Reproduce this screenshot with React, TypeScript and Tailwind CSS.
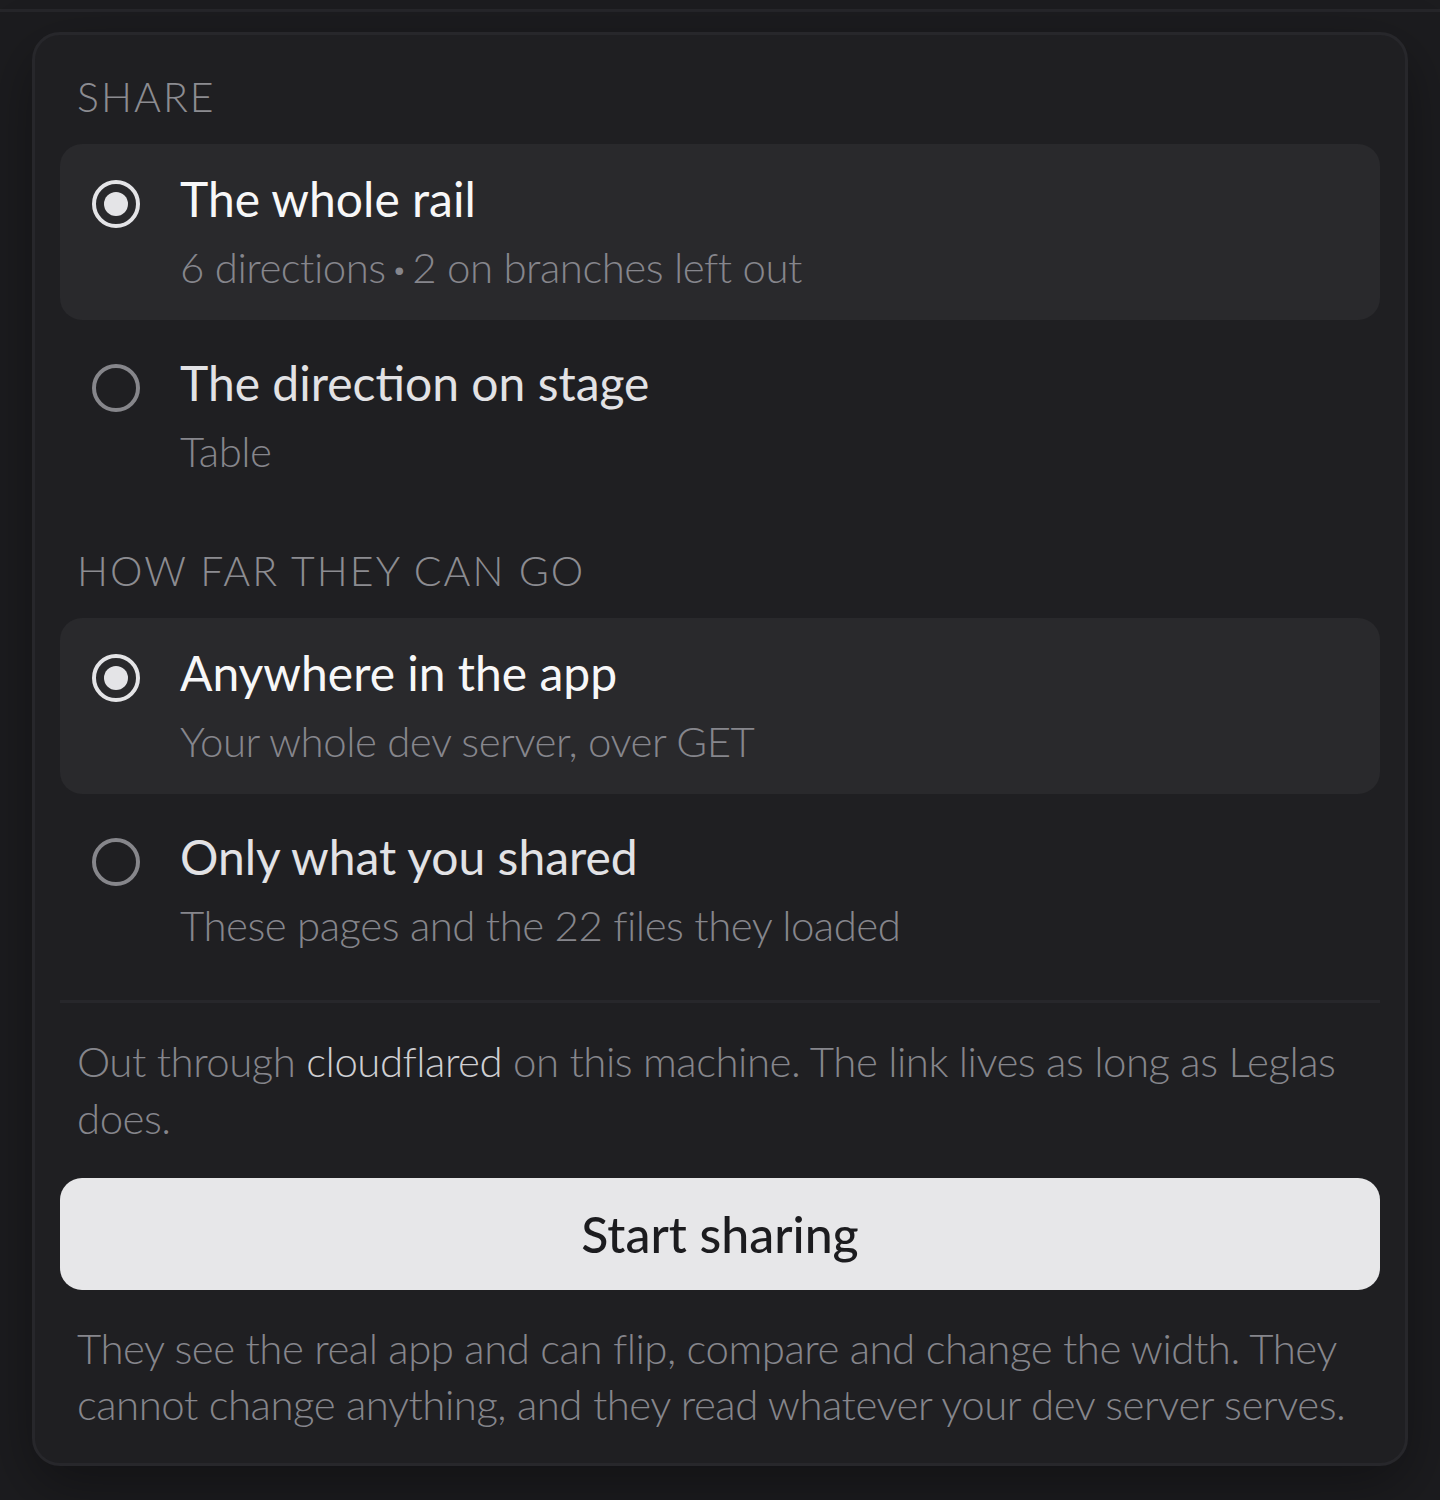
import React from "react";

const font = { fontFamily: "Lato, 'Open Sans', sans-serif" };

function Radio({ on }: { on: boolean }) {
  return (
    <div className="mt-[10px] flex h-[48px] w-[48px] shrink-0 items-center justify-center">
      <svg width="48" height="48" viewBox="0 0 48 48">
        <circle cx="24" cy="24" r="22" fill="none" stroke={on ? "#e4e4e7" : "#86868b"} strokeWidth="4" />
        {on && <circle cx="24" cy="24" r="12" fill="#e4e4e7" />}
      </svg>
    </div>
  );
}

function Option({ on, title, sub }: { on: boolean; title: React.ReactNode; sub: React.ReactNode }) {
  return (
    <div
      className={`flex h-[176px] items-start gap-[40px] rounded-[22px] pl-[32px] pr-[32px] pt-[26px] ${
        on ? "bg-[#29292c]" : ""
      }`}
    >
      <Radio on={on} />
      <div className="flex flex-col">
        <div className={`text-[48px] leading-[58px] ${on ? "text-[#f7f7f8]" : "text-[#e2e2e5]"}`}>{title}</div>
        <div className="mt-[11px] text-[42px] font-light leading-[56px] tracking-[-0.012em] text-[#86868c]">{sub}</div>
      </div>
    </div>
  );
}

export default function App() {
  return (
    <div className="min-h-[1500px] w-[1440px] bg-[#1c1c1f]" style={font}>
      <div className="h-[12px] border-b-[3px] border-[#26262a]" />
      <div className="mx-[32px] mt-[20px] rounded-[28px] border-[3px] border-[#27272b] bg-[#1f1f22] px-[25px] pb-[31px] pt-[37px] shadow-[0_20px_60px_rgba(0,0,0,0.35)]">
        <div className="px-[17px] text-[41px] font-light leading-[50px] tracking-[0.05em] text-[#8c8c91]">SHARE</div>
        <div className="mt-[22px] flex flex-col gap-[8px]">
          <Option
            on
            title="The whole rail"
            sub={
              <>
                6 directions<span className="px-[6px] text-[26px] align-[4px]">•</span>2 on branches left out
              </>
            }
          />
          <Option on={false} title="The direction on stage" sub="Table" />
        </div>
        <div className="mt-[42px] px-[17px] text-[41px] font-light leading-[50px] tracking-[0.05em] text-[#8c8c91]">
          HOW FAR THEY CAN GO
        </div>
        <div className="mt-[22px] flex flex-col gap-[8px]">
          <Option on title="Anywhere in the app" sub="Your whole dev server, over GET" />
          <Option on={false} title="Only what you shared" sub="These pages and the 22 files they loaded" />
        </div>
        <div className="mt-[22px] h-[3px] bg-[#27272b]" />
        <p className="mt-[30px] px-[17px] text-[42px] font-light leading-[57px] tracking-[-0.012em] text-[#86868c]">
          Out through <span className="text-[#cfcfd3]">cloudflared</span> on this machine. The link lives as long as
          Leglas does.
        </p>
        <button className="mt-[31px] flex h-[112px] w-full items-center justify-center rounded-[22px] bg-[#e7e7e9] text-[50px] font-medium text-[#1c1c1f]">
          Start sharing
        </button>
        <p className="mt-[30px] px-[17px] text-[42px] font-light leading-[56px] tracking-[-0.012em] text-[#86868c]">
          They see the real app and can flip, compare and change the width. They cannot change anything, and they read
          whatever your dev server serves.
        </p>
      </div>
    </div>
  );
}
